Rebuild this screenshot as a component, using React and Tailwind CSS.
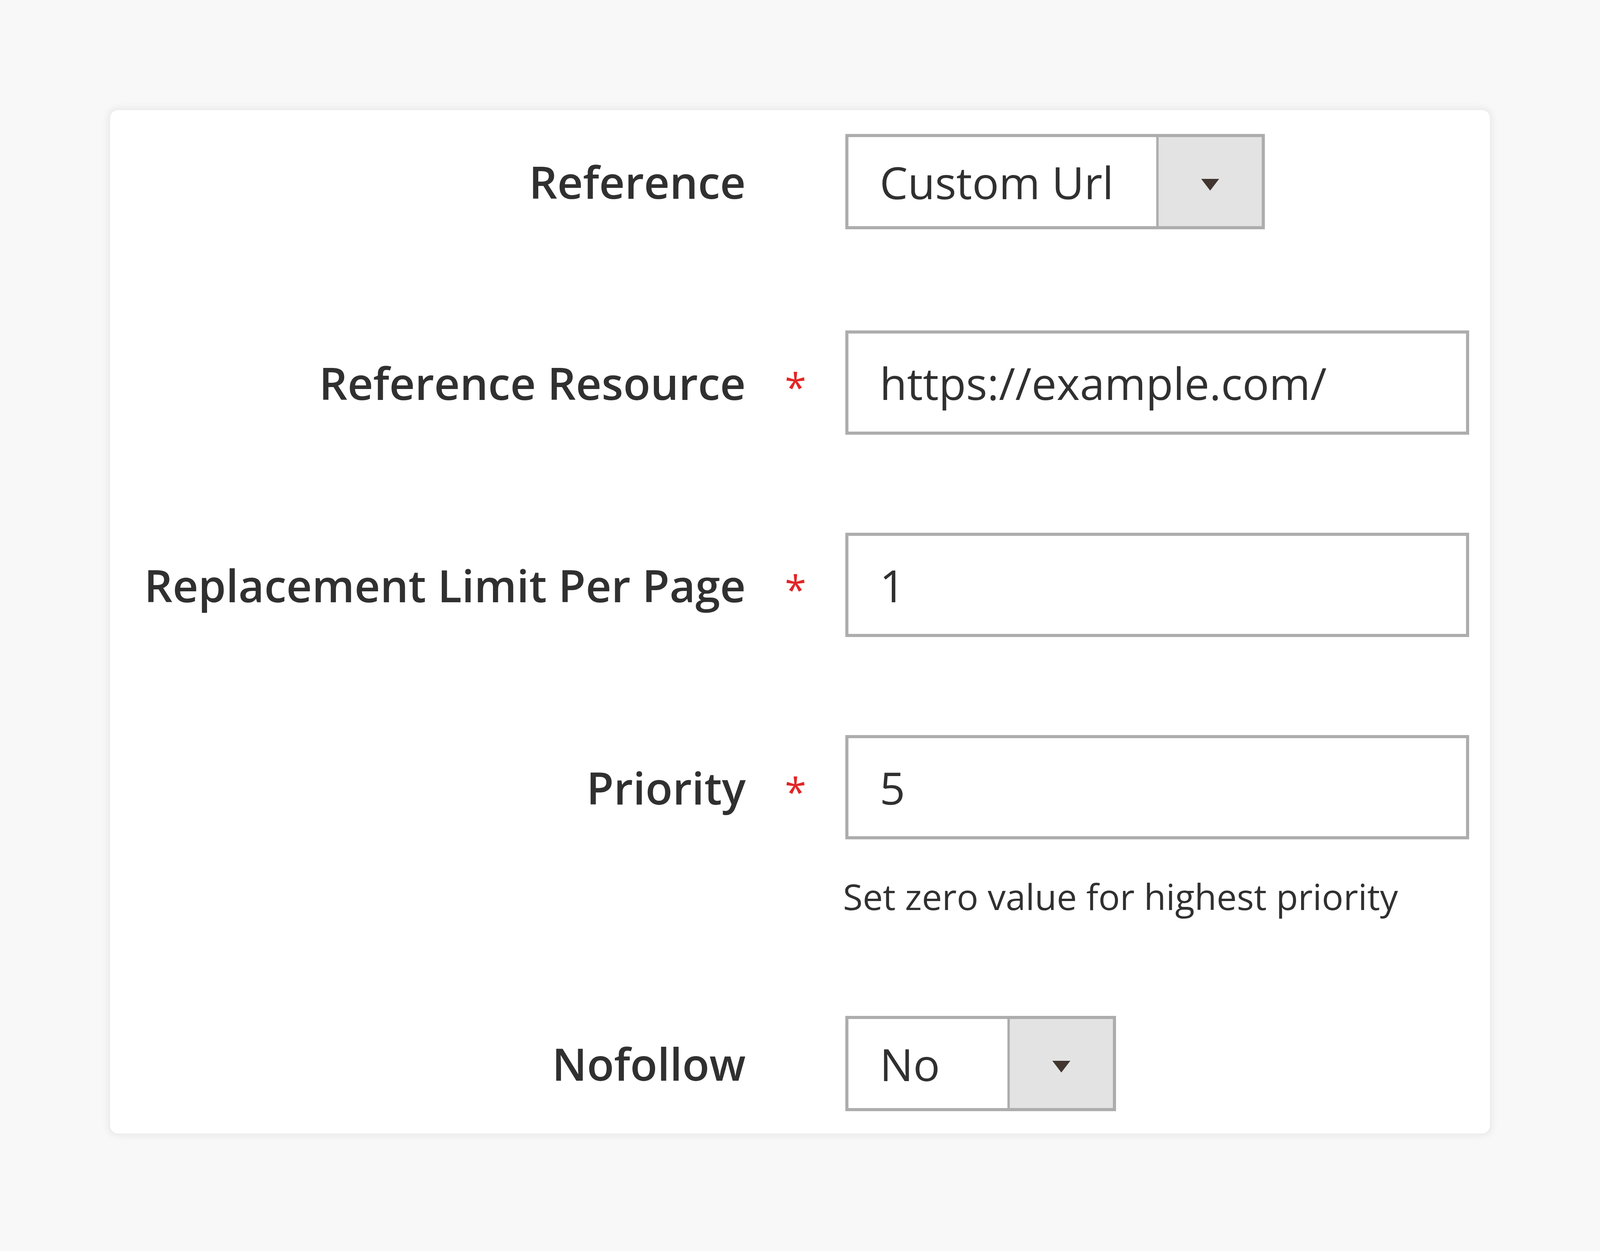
import React from 'react';

const font = { fontFamily: '"Open Sans", "Noto Sans", sans-serif' };

const Label = ({ text, required }) => (
  <>
    <div className="w-[1627px] shrink-0 text-right text-[114px] font-semibold text-[#303030] leading-none">
      {text}
    </div>
    <div className="w-[255px] shrink-0 flex justify-center text-[#e22626] text-[100px] leading-none pt-[20px]">
      {required ? '*' : ''}
    </div>
  </>
);

const Arrow = () => (
  <svg width="46" height="30" viewBox="0 0 46 30">
    <polygon points="0,0 46,0 23,30" fill="#41362f" />
  </svg>
);

const Select = ({ value, width }) => (
  <div className={`flex h-[244px] border-[8px] border-[#adadad] bg-white ${width}`}>
    <div className="flex-1 flex items-center pl-[80px] text-[114px] text-[#303030]">{value}</div>
    <div className="w-[270px] border-l-[6px] border-[#adadad] bg-[#e3e3e3] flex items-center justify-center pt-[16px]">
      <Arrow />
    </div>
  </div>
);

const Input = ({ value }) => (
  <div className="flex-1 h-[267px] border-[8px] border-[#adadad] bg-white flex items-center pl-[80px] text-[114px] text-[#303030]">
    {value}
  </div>
);

export default function App() {
  return (
    <div className="w-full min-h-screen bg-[#f8f8f8] pt-[278px] px-[278px] pb-[281px]" style={font}>
      <div className="w-full bg-white rounded-[24px] shadow-[0_0_20px_rgba(0,0,0,0.08)] border-[4px] border-[#eeeeee] pt-[61px] pb-[57px] pr-[53px] flex flex-col">
        <div className="flex items-center">
          <Label text="Reference" />
          <Select value="Custom Url" width="w-[1074px]" />
        </div>
        <div className="flex items-center mt-[259px]">
          <Label text="Reference Resource" required />
          <Input value="https://example.com/" />
        </div>
        <div className="flex items-center mt-[251px]">
          <Label text="Replacement Limit Per Page" required />
          <Input value="1" />
        </div>
        <div className="flex items-center mt-[251px]">
          <Label text="Priority" required />
          <Input value="5" />
        </div>
        <div className="pl-[1876px] mt-[100px] text-[92px] text-[#303030] leading-none">
          Set zero value for highest priority
        </div>
        <div className="flex items-center mt-[260px]">
          <Label text="Nofollow" />
          <Select value="No" width="w-[693px]" />
        </div>
      </div>
    </div>
  );
}
